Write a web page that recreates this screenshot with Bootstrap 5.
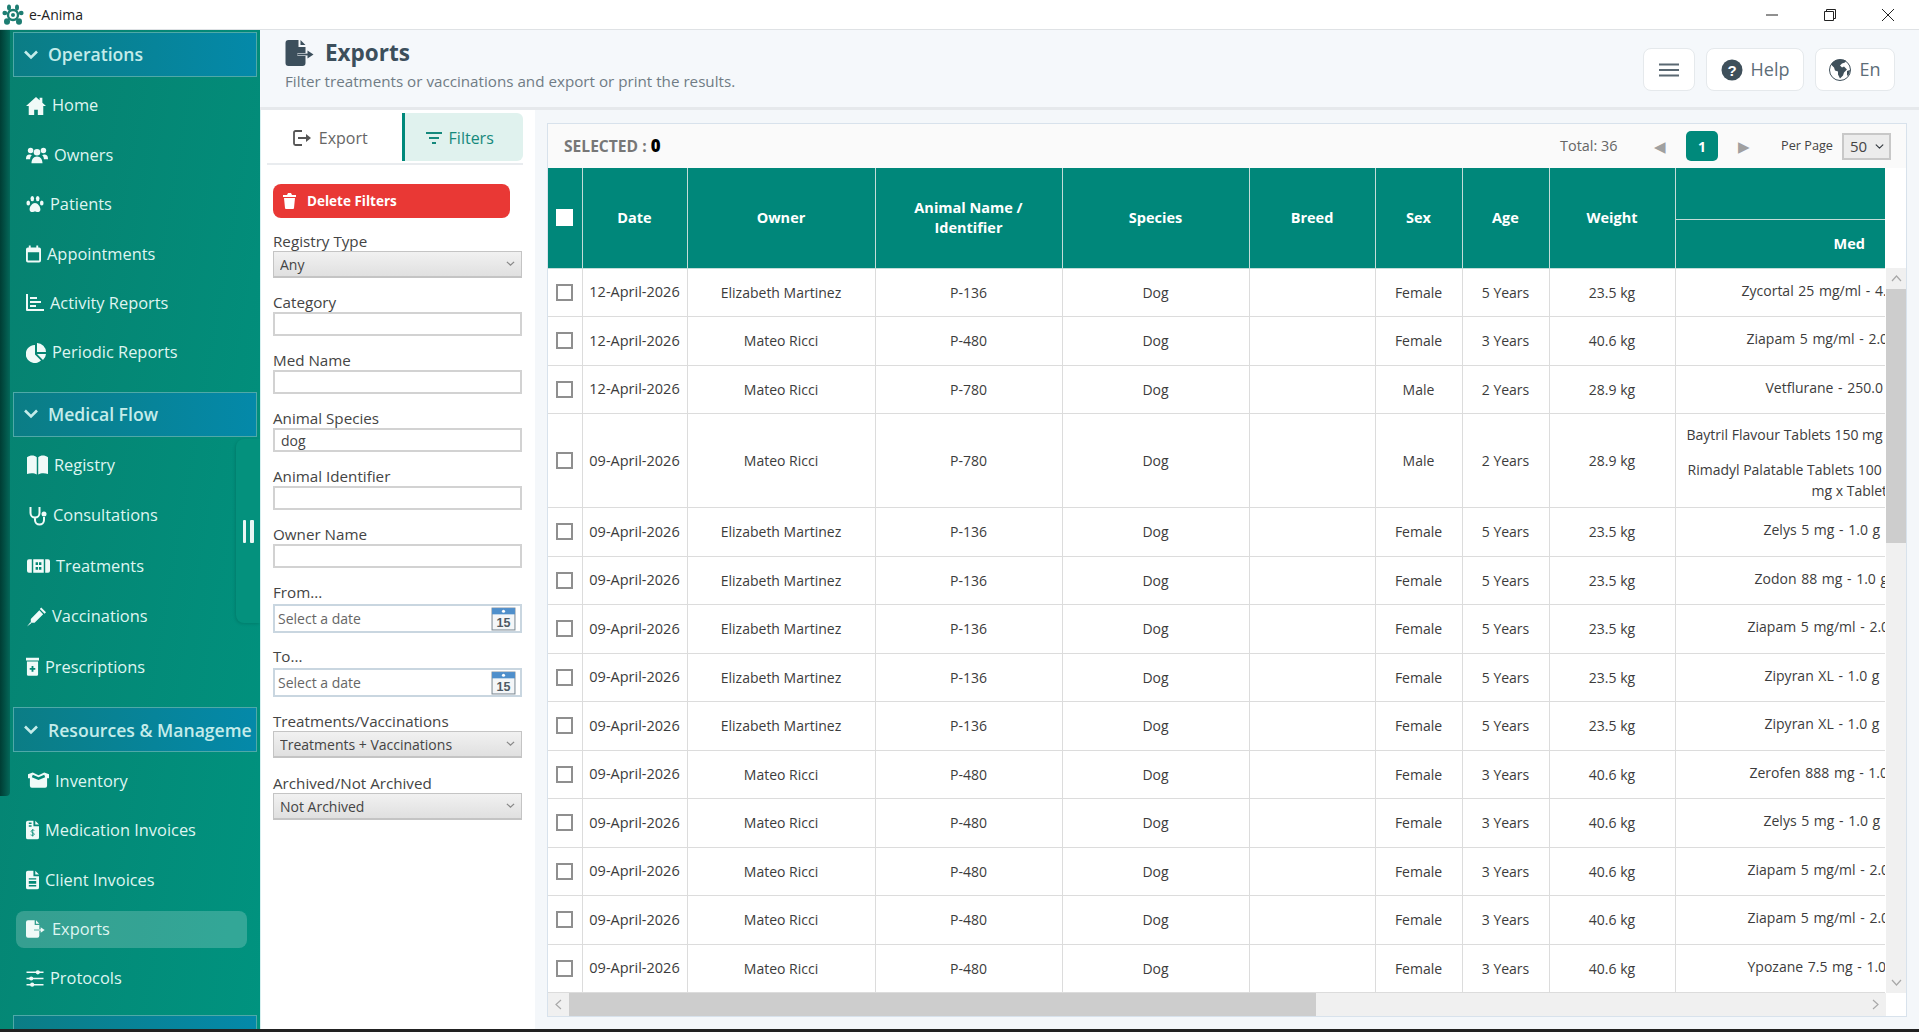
<!DOCTYPE html>
<html lang="en">
<head>
  <meta charset="UTF-8" />
  <meta name="viewport" content="width=device-width, initial-scale=1" />
  <title>e-Anima</title>
  <link href="https://cdn.jsdelivr.net/npm/bootstrap@5.3.2/dist/css/bootstrap.min.css" rel="stylesheet" />
  <style>
    html, body { height: 100%; }
    body {
      font-family: "Open Sans", "Noto Sans", sans-serif;
      font-size: 14px;
      color: #3c3c3c;
      background: #f4f7fa;
      overflow: hidden;
    }
    .win-title { height: 30px; background: #fff; border-bottom: 1px solid #dfe2e5; flex: none; }
    .win-title .app-name { font-size: 14px; color: #222; margin-left: 5px; }
    .win-btns { gap: 46px; padding-right: 25px; }
    .bottom-bar { height: 3px; background: #222; flex: none; }

    /* sidebar */
    .side-nav { width: 260px; flex: none; background: linear-gradient(100deg, #07806f, #00937f); overflow: hidden; position: relative; }
    .side-strip { width: 10px; flex: none; }
    .side-thumb { height: 766px; background: linear-gradient(90deg, #003d34, #04685a); border-radius: 0 0 4px 0; }
    .side-menu { width: 250px; flex: none; }
    .side-head {
      height: 45px; margin: 2px 3px 0 3px; padding: 0 4px 0 9px;
      background: linear-gradient(90deg, #0b7d85, #0489a9);
      border: 1px solid #4fa9a8;
      color: #c4ecea; font-weight: 600; font-size: 17.6px;
      white-space: nowrap; overflow: hidden;
    }
    .side-head svg { width: 16px; height: 12px; margin-right: 9px; flex: none; }
    .side-head span { overflow: hidden; min-width: 0; }
    .side-group { padding: 4px 0 12.5px 0; }
    .side-item { height: 49.4px; padding-left: 16px; color: #dff5f1; font-size: 16.4px; gap: 6px; }
    .med-group { padding: 3px 0 15px 0; }
    .med-group .side-item { height: 50.5px; }
    .side-item svg { height: 20px; flex: none; fill: #f0faf8; }
    .side-item.current { background: rgba(255, 255, 255, .2); border-radius: 8px; margin: 6px 13px 6px 6px; height: 37px; padding-left: 10px; }
    .side-handle { position: absolute; right: 0; top: 409px; width: 24px; height: 184px; background: #04917d; border-radius: 8px 0 0 8px; box-shadow: -1px 1px 3px rgba(0, 0, 0, .12); }
    .side-handle span { width: 3.5px; height: 23px; background: #e8f6f3; border-radius: 1px; }

    /* page header */
    .page-head { height: 80px; flex: none; background: #f5f8fb; border-bottom: 3px solid #e6e9ec; padding: 9px 24px 0 25px; }
    .page-head h1 { font-size: 22.5px; font-weight: 700; color: #3c4f5c; margin: 0 0 0 1px; }
    .page-head p { font-size: 15.2px; color: #707c85; margin: 4px 0 0; }
    .head-btn {
      height: 43px; background: #fff; border: 1px solid #e5e9ec; border-radius: 8px;
      color: #5d6d78; font-size: 18px; gap: 8px;
    }
    .head-btns { gap: 11px; padding-top: 9px; height: 52px; }

    /* filters */
    .filter-pane { width: 275px; flex: none; background: #fff; padding: 3px 14px 0 12px; border-left: 1px solid #d7f0f0; }
    .tab-row { height: 52px; border-bottom: 2px solid #e9ecef; margin: 0 -2px 0 -6px; padding-bottom: 2px; }
    .tab-btn { font-size: 16px; color: #666; gap: 7px; padding: 2px 9px 0 0; }
    .tab-btn.tab-export { width: 137px; }
    .tab-btn.tab-filter { width: 122px; background: #e0f2ee; color: #15897c; border-left: 3px solid #00897b; border-radius: 0 6px 6px 0; }
    .btn-wipe {
      width: 237px; height: 34px; margin: 19px 0 14px; padding: 0 0 0 10px; gap: 11px;
      background: #e93835; border: 0; border-radius: 8px; color: #fff; font-size: 13.5px; font-weight: 700;
    }
    .btn-wipe:hover { background: #e93835; color: #fff; }
    .fld { margin-bottom: 15px; }
    .fld.fld-from, .fld.fld-last { margin-bottom: 16px; }
    .fld.fld-from { margin-bottom: 14px; }
    .fld.fld-to { margin-bottom: 15px; }
    .fld label { display: block; font-size: 15.2px; line-height: 19px; color: #444; }
    .fld .form-control, .fld .form-select {
      width: 249px; border-radius: 0; font-size: 14px; padding: 0 6px; color: #444; box-shadow: none;
    }
    .fld .form-control { height: 24px; border: 2px solid #d2d2d2; }
    .fld .form-select {
      --chev: url("data:image/svg+xml,%3csvg xmlns='http://www.w3.org/2000/svg' viewBox='0 0 10 6'%3e%3cpath fill='none' stroke='%23888' stroke-width='1.4' d='M1 1l4 4 4-4'/%3e%3c/svg%3e");
      height: 27px; border: 1px solid #c4c4c4; border-bottom-width: 2px;
      background-image: var(--chev), linear-gradient(#f1f1f1, #e0e0e0);
      background-size: 9px, 100%; background-position: right 6px center, 0 0; background-repeat: no-repeat;
    }
    .date-box { width: 249px; height: 29px; margin-top: 2px; border: 2px solid #c9d6e0; padding: 0 4px 0 3px; background: #fff; }
    .date-box span { font-size: 14px; color: #666; }
    .date-box svg { width: 25px; height: 25px; }

    /* table */
    .gutter { width: 12px; flex: none; }
    .grid-pane { margin: 13px 12px 12px 0; min-width: 0; background: #fff; border: 1px solid #d8e2ec; }
    .grid-bar { height: 44px; flex: none; background: #fafafa; padding: 0 15px 0 16px; }
    .sel-count { font-weight: 700; font-size: 15.6px; color: #777; }
    .sel-count b { color: #000; font-size: 16.8px; }
    .total-lbl { font-size: 14.4px; color: #666; width: 94px; }
    .pg-arrow { color: #a0a0a0; font-size: 15px; line-height: 1; }
    .pg-cur { width: 32px; height: 30px; background: #00897b; color: #fff; border-radius: 5px; font-weight: 700; font-size: 14px; margin: 0 20px; }
    .per-lbl { font-size: 12.7px; color: #444; margin: 0 9px 0 31px; }
    .per-sel.form-select {
      width: 49px; height: 27px; border-radius: 0; padding: 0 0 0 6px; font-size: 15px; color: #444; border: 2px solid #c8c8c8;
      background-color: #ececec; background-size: 9px; background-position: right 5px top 7px;
    }
    .grid-view { min-height: 0; width: 1337px; overflow: hidden; }
    .grid-tbl { table-layout: fixed; width: 1337px; margin: 0; font-size: 14px; border-collapse: collapse; }
    .grid-tbl th {
      background: #00877a; color: #fff; border: 1px solid #c4dcd8; padding: 0 8px; text-align: center;
      vertical-align: middle; font-size: 14.5px; line-height: 20px; font-weight: 700; box-shadow: none;
    }
    .grid-tbl thead th:first-child { padding: 0 5px; }
    .grid-tbl thead tr:first-child th { border-top: 0; height: 51px; }
    .grid-tbl thead tr:last-child th { height: 49px; }
    .grid-tbl thead th:first-child, .grid-tbl tbody td:first-child { border-left: 0; }
    .grid-tbl thead th:last-child, .grid-tbl tbody td:last-child { border-right: 0; }
    .grid-tbl td {
      height: 48.5px; padding: 0 5px; border: 1px solid #dcdcdc; text-align: center; vertical-align: middle;
      color: #3c3c3c; white-space: nowrap; overflow: hidden;
    }
    .grid-tbl td:nth-child(2) { font-size: 14.5px; padding: 0 2px; }
    .grid-tbl td.med-cell { padding: 0 0 4px 0; text-align: left; word-spacing: 1px; }
    .grid-tbl td.med-multi { height: 94px; padding: 3px 0 0 0; word-spacing: 0; }
    .med-line { white-space: nowrap; line-height: 21px; }
    .med-line + .med-line { margin-top: 14px; }
    .med-line + .med-wrap { margin-top: 0; }
    .grid-tbl .form-check-input {
      width: 17px; height: 17px; margin: 0; float: none; border-radius: 0; border: 2px solid #8f8f8f; display: block; margin-left: 3px;
    }
    .grid-tbl th .form-check-input { border-color: #fff; }
    .sb-v { width: 20px; flex: none; background: #f0f0f0; }
    .sb-top { height: 100px; flex: none; background: #fff; }
    .sb-arrow { height: 21px; flex: none; color: #a8a8a8; }
    .sb-v .sb-thumb { height: 254px; flex: none; background: #cdcdcd; }
    .sb-h { height: 23px; flex: none; background: #f0f0f0; }
    .sb-h .sb-thumb { width: 747px; background: #cdcdcd; }
    .sb-side { width: 21px; flex: none; color: #a8a8a8; }
    .sb-corner { width: 20px; flex: none; background: #fff; }
  </style>
</head>
<body class="d-flex flex-column">
  <svg width="0" height="0" class="d-none">
    <symbol id="i-chev" viewBox="0 0 16 12"><path d="M2 2.5l6 6 6-6" fill="none" stroke="#c4ecea" stroke-width="2.6"/></symbol>
    <symbol id="i-file-export" viewBox="0 0 30 26"><path d="M3 0h10v7h7v6h-8v3h8v7a3 3 0 0 1-3 3H3a3 3 0 0 1-3-3V3a3 3 0 0 1 3-3zM15 0l5 5h-5z"/><path d="M12 14.5h12" stroke="currentColor" stroke-width="1.8" fill="none"/><path d="M22 10.5l6 4-6 4z"/></symbol>
    <symbol id="i-x" viewBox="0 0 12 12"><path d="M0 0l12 12M12 0L0 12" stroke="#222" fill="none"/></symbol>
  </svg>

  <div class="win-title d-flex align-items-center">
    <svg width="22" height="22" viewBox="0 0 22 22" style="margin-left:2px"><g fill="#1d7d72"><circle cx="11" cy="11" r="5" fill="none" stroke="#1d7d72" stroke-width="2.4"/><circle cx="11" cy="11" r="2"/><ellipse cx="7" cy="3.5" rx="2" ry="3"/><ellipse cx="15" cy="3.5" rx="2" ry="3"/><ellipse cx="2.8" cy="9" rx="2.4" ry="2.2"/><ellipse cx="19.2" cy="9" rx="2.4" ry="2.2"/><ellipse cx="5" cy="17.5" rx="3" ry="3.2"/><ellipse cx="17" cy="17.5" rx="3" ry="3.2"/></g></svg>
    <span class="app-name">e-Anima</span>
    <div class="win-btns d-flex align-items-center ms-auto">
      <svg width="12" height="12" viewBox="0 0 12 12"><path d="M0 6h12" stroke="#222"/></svg>
      <svg width="12" height="12" viewBox="0 0 12 12"><path d="M.5 2.5h9v9h-9zM2.5 2.5v-2h9v9h-2" fill="none" stroke="#222"/></svg>
      <svg width="12" height="12"><use href="#i-x"/></svg>
    </div>
  </div>

  <div class="d-flex flex-grow-1" style="min-height:0">
    <aside class="side-nav d-flex">
      <div class="side-strip"><div class="side-thumb"></div></div>
      <div class="side-menu">
        <div class="side-head d-flex align-items-center"><svg><use href="#i-chev"/></svg>Operations</div>
        <div class="side-group">
          <div class="side-item d-flex align-items-center"><svg viewBox="0 0 22 20" width="20"><path d="M11 0L0 10h3v10h6v-6h4v6h6V10h3l-4-3.6V1h-3v2.7z"/></svg>Home</div>
          <div class="side-item d-flex align-items-center"><svg viewBox="0 0 24 20" width="22"><circle cx="5" cy="5" r="3"/><circle cx="19" cy="5" r="3"/><circle cx="12" cy="7" r="3.6"/><path d="M0 14c0-3 1.500-4.500 4-4.500 1 0 1.800.3 2.400.8C5 11.500 4.500 13 4.500 14.500H0zM24 14c0-3-1.500-4.500-4-4.500-1 0-1.800.3-2.400.8 1.400 1.200 1.900 2.700 1.900 4.200H24zM6 19c0-4 2-7.500 6-7.500s6 3.500 6 7.500z"/></svg>Owners</div>
          <div class="side-item d-flex align-items-center"><svg viewBox="0 0 20 20" width="18"><ellipse cx="7" cy="4" rx="2" ry="3"/><ellipse cx="13" cy="4" rx="2" ry="3"/><ellipse cx="2.500" cy="9" rx="2" ry="2.800"/><ellipse cx="17.500" cy="9" rx="2" ry="2.800"/><path d="M10 9c-3 0-6 4-6 7 0 2 1.500 3 3 3s2-.7 3-.7 1.500.7 3 .7 3-1 3-3c0-3-3-7-6-7z"/></svg>Patients</div>
          <div class="side-item d-flex align-items-center"><svg viewBox="0 0 16 20" width="15"><path d="M3 1h2v2h6V1h2v2h1a2 2 0 0 1 2 2v12a2 2 0 0 1-2 2H2a2 2 0 0 1-2-2V5a2 2 0 0 1 2-2h1zM2 8v9h12V8z"/></svg>Appointments</div>
          <div class="side-item d-flex align-items-center"><svg viewBox="0 0 18 20" width="18"><path d="M0 1h2v15h16v2H1a1 1 0 0 1-1-1zM4 4h7v2H4zM4 8h11v2H4zM4 12h6v2H4z"/></svg>Activity Reports</div>
          <div class="side-item d-flex align-items-center"><svg viewBox="0 0 20 20" width="20"><path d="M9 2v9.500l6 6A9 9 0 1 1 9 2zM11 0a9 9 0 0 1 9 9h-9zM11 11h9a9 9 0 0 1-3 6z"/></svg>Periodic Reports</div>
        </div>
        <div class="side-head d-flex align-items-center"><svg><use href="#i-chev"/></svg>Medical Flow</div>
        <div class="side-group med-group">
          <div class="side-item d-flex align-items-center" style="padding-left:17px"><svg viewBox="0 0 20 18" width="21"><path d="M0 1.500C3-.5 7-.5 9.300 1.500V18C7 16.500 3 16.500 0 17.500zM20 1.500C17-.5 13-.5 10.700 1.500V18c2.300-1.500 6.300-1.500 9.300-.5z"/></svg>Registry</div>
          <div class="side-item d-flex align-items-center" style="padding-left:18px"><svg viewBox="0 0 18 20" width="19"><path d="M2 1v6a4.500 4.500 0 0 0 9 0V1M6.500 12v2a4.500 4.500 0 0 0 9 0v-3" fill="none" stroke="#f0faf8" stroke-width="2"/><circle cx="15.500" cy="8" r="2.500"/></svg>Consultations</div>
          <div class="side-item d-flex align-items-center" style="padding-left:17px"><svg viewBox="0 0 24 14" width="23" height="14" style="height:14px"><path d="M2 0h3v14H2a2 2 0 0 1-2-2V2a2 2 0 0 1 2-2zM19 0h3a2 2 0 0 1 2 2v10a2 2 0 0 1-2 2h-3zM6.500 0h11v14h-11zM9 3v3h2.500V3zm3.500 0v3H15V3zM9 8v3h2.500V8zm3.500 0v3H15V8z" fill-rule="evenodd"/></svg>Treatments</div>
          <div class="side-item d-flex align-items-center" style="padding-left:17px"><svg viewBox="0 0 20 20" width="19"><path d="M13 3l4 4-9 9H4v-4zM15 0l5 5-1.500 1.500-5-5zM0 20l3.500-4.500 1 1z"/></svg>Vaccinations</div>
          <div class="side-item d-flex align-items-center"><svg viewBox="0 0 14 20" width="13"><path d="M0 0h14v3H0zM1 4h12v14a1.500 1.500 0 0 1-1.500 1.500h-9A1.500 1.500 0 0 1 1 18zM6 9v2H4v2h2v2h2v-2h2v-2H8V9z" fill-rule="evenodd"/></svg>Prescriptions</div>
        </div>
        <div class="side-head d-flex align-items-center" style="margin-top:0"><svg><use href="#i-chev"/></svg><span>Resources &amp; Management</span></div>
        <div class="side-group">
          <div class="side-item d-flex align-items-center" style="padding-left:18px"><svg viewBox="0 0 22 18" width="21"><path d="M0 2L5 0l6 3 6-3 5 2v4h-2v8a2 2 0 0 1-2 2H4a2 2 0 0 1-2-2V6H0zM5 2.500L4 5l7 3 7-3-1-2.500L11 5z" fill-rule="evenodd"/></svg>Inventory</div>
          <div class="side-item d-flex align-items-center"><svg viewBox="0 0 14 20" width="13"><path d="M2 0h6v6h6v12a2 2 0 0 1-2 2H2a2 2 0 0 1-2-2V2a2 2 0 0 1 2-2zM10 0l4 4h-4zM3 2v1.500h3V2zM3 5v1.500h3V5z" fill-rule="evenodd"/><path d="M9 10.500C8 9.700 5.500 10 5.500 11.500S9 13 9 14.500 6 16 5 15.200M7.200 9v8" fill="none" stroke="#0a8c7a" stroke-width=".9"/></svg>Medication Invoices</div>
          <div class="side-item d-flex align-items-center"><svg viewBox="0 0 14 20" width="13"><path d="M2 0h6v6h6v12a2 2 0 0 1-2 2H2a2 2 0 0 1-2-2V2a2 2 0 0 1 2-2zM10 0l4 4h-4zM3 8v1.500h8V8zM3 11v3h8v-3zM3 15.500V17h8v-1.500z" fill-rule="evenodd"/></svg>Client Invoices</div>
          <div class="side-item current d-flex align-items-center"><svg width="20" height="18" style="height:18px;color:#f0faf8"><use href="#i-file-export"/></svg>Exports</div>
          <div class="side-item d-flex align-items-center"><svg viewBox="0 0 18 18" width="18" height="17" style="height:17px"><path d="M0 2.500h18M0 9h18M0 15.500h18" stroke="#f0faf8" stroke-width="1.600" fill="none"/><circle cx="12" cy="2.500" r="2.200"/><circle cx="5" cy="9" r="2.200"/><circle cx="6" cy="15.500" r="2.200"/></svg>Protocols</div>
        </div>
        <div class="side-head" style="margin-top:0"></div>
      </div>
      <div class="side-handle d-flex align-items-center justify-content-center gap-1"><span></span><span></span></div>
    </aside>

    <main class="d-flex flex-column flex-grow-1" style="min-width:0">
      <header class="page-head d-flex">
        <div>
          <div class="d-flex align-items-center gap-2">
            <svg width="31" height="26" style="color:#3c4f5c;fill:#3c4f5c"><use href="#i-file-export"/></svg>
            <h1>Exports</h1>
          </div>
          <p>Filter treatments or vaccinations and export or print the results.</p>
        </div>
        <div class="head-btns ms-auto d-flex">
          <div class="head-btn d-flex align-items-center justify-content-center" style="width:52px"><svg width="20" height="14" viewBox="0 0 20 14"><path d="M0 1.500h20M0 7h20M0 12.500h20" stroke="#5a6872" stroke-width="2"/></svg></div>
          <div class="head-btn d-flex align-items-center justify-content-center" style="width:98px"><svg width="22" height="22" viewBox="0 0 22 22"><circle cx="11" cy="11" r="10.500" fill="#3f505b"/><text x="11" y="16.500" text-anchor="middle" font-family="Liberation Sans" font-size="15" font-weight="700" fill="#fff">?</text></svg>Help</div>
          <div class="head-btn d-flex align-items-center justify-content-center" style="width:80px"><svg width="22" height="22" viewBox="0 0 22 22"><circle cx="11" cy="11" r="10.500" fill="#fff" stroke="#3f505b" stroke-width="1"/><path d="M11 .5a10.500 10.500 0 0 0-9 5l3 3 1 3 3 1v3l2 4 3-3 1-3 3-3-3-3-2 1-2-2 2-2 3-1 1-2A10.500 10.500 0 0 0 11 .5zM21 11l-3 1v4l1 1a10.500 10.500 0 0 0 2-6z" fill="#3f505b"/></svg>En</div>
        </div>
      </header>

      <div class="d-flex flex-grow-1" style="min-height:0">
        <section class="filter-pane">
          <div class="tab-row d-flex">
            <div class="tab-btn tab-export d-flex align-items-center justify-content-center">
              <svg width="19" height="16" viewBox="0 0 19 16"><path d="M9 1H2.500A1.500 1.500 0 0 0 1 2.500v11A1.500 1.500 0 0 0 2.500 15H9" fill="none" stroke="#555" stroke-width="1.800"/><path d="M5 8h9" stroke="#555" stroke-width="2"/><path d="M13 4l5 4-5 4z" fill="#555"/></svg>Export
            </div>
            <div class="tab-btn tab-filter d-flex align-items-center justify-content-center">
              <svg width="16" height="13" viewBox="0 0 16 13"><path d="M0 1h16M3 6h10M6 11h4" stroke="#15897c" stroke-width="2"/></svg>Filters
            </div>
          </div>
          <button type="button" class="btn btn-wipe d-flex align-items-center">
            <svg width="13" height="16" viewBox="0 0 13 16"><path d="M0 2h4l1-2h3l1 2h4v2H0zM1 5h11l-1 10a1 1 0 0 1-1 1H3a1 1 0 0 1-1-1z" fill="#fff"/></svg>Delete Filters
          </button>
          <div class="fld"><label>Registry Type</label><select class="form-select"><option>Any</option></select></div>
          <div class="fld"><label>Category</label><input class="form-control" type="text"></div>
          <div class="fld"><label>Med Name</label><input class="form-control" type="text"></div>
          <div class="fld"><label>Animal Species</label><input class="form-control" type="text" value="dog"></div>
          <div class="fld"><label>Animal Identifier</label><input class="form-control" type="text"></div>
          <div class="fld"><label>Owner Name</label><input class="form-control" type="text"></div>
          <div class="fld fld-from"><label>From...</label>
            <div class="date-box d-flex align-items-center justify-content-between"><span>Select a date</span>
              <svg viewBox="0 0 24 24"><rect x="1" y="2" width="22" height="21" fill="#f4f6f8" stroke="#7d8a94"/><rect x="1" y="2" width="22" height="6" fill="#4f8fcb"/><circle cx="12" cy="5" r="1.500" fill="#fff"/><text x="12" y="20.500" text-anchor="middle" font-family="Liberation Sans" font-size="12" font-weight="700" fill="#4d5a64">15</text></svg>
            </div></div>
          <div class="fld fld-to"><label>To...</label>
            <div class="date-box d-flex align-items-center justify-content-between"><span>Select a date</span>
              <svg viewBox="0 0 24 24"><rect x="1" y="2" width="22" height="21" fill="#f4f6f8" stroke="#7d8a94"/><rect x="1" y="2" width="22" height="6" fill="#4f8fcb"/><circle cx="12" cy="5" r="1.500" fill="#fff"/><text x="12" y="20.500" text-anchor="middle" font-family="Liberation Sans" font-size="12" font-weight="700" fill="#4d5a64">15</text></svg>
            </div></div>
          <div class="fld fld-last"><label>Treatments/Vaccinations</label><select class="form-select"><option>Treatments + Vaccinations</option></select></div>
          <div class="fld"><label>Archived/Not Archived</label><select class="form-select"><option>Not Archived</option></select></div>
        </section>
        <div class="gutter"></div>
        <section class="grid-pane d-flex flex-column flex-grow-1">
          <div class="grid-bar d-flex align-items-center">
            <div class="sel-count">SELECTED : <b>0</b></div>
            <div class="ms-auto total-lbl">Total: 36</div>
            <span class="pg-arrow">◀</span>
            <div class="pg-cur d-flex align-items-center justify-content-center">1</div>
            <span class="pg-arrow">▶</span>
            <span class="per-lbl">Per Page</span>
            <select class="form-select per-sel"><option>50</option></select>
          </div>
          <div class="d-flex flex-grow-1" style="min-height:0">
            <div class="grid-view flex-grow-1">
              <table class="table grid-tbl">
                <colgroup>
                  <col style="width:34px"><col style="width:105px"><col style="width:188px"><col style="width:187px"><col style="width:187px"><col style="width:126px"><col style="width:87px"><col style="width:87px"><col style="width:126px"><col style="width:210px">
                </colgroup>
                <thead>
                  <tr>
                    <th rowspan="2"><input class="form-check-input" type="checkbox"></th>
                    <th rowspan="2">Date</th><th rowspan="2">Owner</th><th rowspan="2">Animal Name /<br>Identifier</th>
                    <th rowspan="2">Species</th><th rowspan="2">Breed</th><th rowspan="2">Sex</th><th rowspan="2">Age</th><th rowspan="2">Weight</th>
                    <th></th>
                  </tr>
                  <tr><th style="text-align:right;padding-right:20px">Med</th></tr>
                </thead>
                <tbody id="grid-body"></tbody>
              </table>
            </div>
            <div class="sb-v d-flex flex-column">
              <div class="sb-top"></div>
              <div class="sb-arrow d-flex align-items-center justify-content-center"><svg width="11" height="7" viewBox="0 0 11 7"><path d="M1 6l4.500-5L10 6" fill="none" stroke="currentColor" stroke-width="1.200"/></svg></div>
              <div class="sb-thumb"></div>
              <div class="flex-grow-1"></div>
              <div class="sb-arrow d-flex align-items-center justify-content-center"><svg width="11" height="7" viewBox="0 0 11 7"><path d="M1 1l4.500 5L10 1" fill="none" stroke="currentColor" stroke-width="1.200"/></svg></div>
            </div>
          </div>
          <div class="sb-h d-flex">
            <div class="sb-side d-flex align-items-center justify-content-center"><svg width="7" height="11" viewBox="0 0 7 11"><path d="M6 1L1 5.500 6 10" fill="none" stroke="currentColor" stroke-width="1.200"/></svg></div>
            <div class="sb-thumb"></div>
            <div class="flex-grow-1"></div>
            <div class="sb-side d-flex align-items-center justify-content-center"><svg width="7" height="11" viewBox="0 0 7 11"><path d="M1 1l5 4.500L1 10" fill="none" stroke="currentColor" stroke-width="1.200"/></svg></div>
            <div class="sb-corner"></div>
          </div>
        </section>
      </div>
    </main>
  </div>
  <div class="bottom-bar"></div>

  <script src="https://cdn.jsdelivr.net/npm/bootstrap@5.3.2/dist/js/bootstrap.bundle.min.js"></script>
  <script>
    // date, owner, id, sex, age, weight, [med text, left offset in px]
    const em = 'Elizabeth Martinez', mr = 'Mateo Ricci';
    const linhas = [
      ['12-April-2026', em, 'P-136', 'Female', '5 Years', '23.5 kg', [['Zycortal 25 mg/ml - 4.0 ml', 66]]],
      ['12-April-2026', mr, 'P-480', 'Female', '3 Years', '40.6 kg', [['Ziapam 5 mg/ml - 2.0 ml', 71]]],
      ['12-April-2026', mr, 'P-780', 'Male', '2 Years', '28.9 kg', [['Vetflurane - 250.0 ml', 90]]],
      ['09-April-2026', mr, 'P-780', 'Male', '2 Years', '28.9 kg', [['Baytril Flavour Tablets 150 mg', 11], ['Rimadyl Palatable Tablets 100', 12], ['mg x Tablet', 136]]],
      ['09-April-2026', em, 'P-136', 'Female', '5 Years', '23.5 kg', [['Zelys 5 mg - 1.0 g', 88]]],
      ['09-April-2026', em, 'P-136', 'Female', '5 Years', '23.5 kg', [['Zodon 88 mg - 1.0 g', 79]]],
      ['09-April-2026', em, 'P-136', 'Female', '5 Years', '23.5 kg', [['Ziapam 5 mg/ml - 2.0 ml', 72]]],
      ['09-April-2026', em, 'P-136', 'Female', '5 Years', '23.5 kg', [['Zipyran XL - 1.0 g', 89]]],
      ['09-April-2026', em, 'P-136', 'Female', '5 Years', '23.5 kg', [['Zipyran XL - 1.0 g', 89]]],
      ['09-April-2026', mr, 'P-480', 'Female', '3 Years', '40.6 kg', [['Zerofen 888 mg - 1.0 g', 74]]],
      ['09-April-2026', mr, 'P-480', 'Female', '3 Years', '40.6 kg', [['Zelys 5 mg - 1.0 g', 88]]],
      ['09-April-2026', mr, 'P-480', 'Female', '3 Years', '40.6 kg', [['Ziapam 5 mg/ml - 2.0 ml', 72]]],
      ['09-April-2026', mr, 'P-480', 'Female', '3 Years', '40.6 kg', [['Ziapam 5 mg/ml - 2.0 ml', 72]]],
      ['09-April-2026', mr, 'P-480', 'Female', '3 Years', '40.6 kg', [['Ypozane 7.5 mg - 1.0 g', 72]]]
    ];

    const corpo = document.getElementById('grid-body');
    linhas.forEach(l => {
      const tr = document.createElement('tr');
      const meds = l[6].map((m, i) => {
        const cls = i === 2 ? 'med-line med-wrap' : 'med-line';
        return `<div class="${cls}" style="padding-left:${m[1]}px">${m[0]}</div>`;
      }).join('');
      tr.innerHTML = `<td><input class="form-check-input" type="checkbox"></td>
        <td>${l[0]}</td><td>${l[1]}</td><td>${l[2]}</td><td>Dog</td><td></td>
        <td>${l[3]}</td><td>${l[4]}</td><td>${l[5]}</td>
        <td class="med-cell${l[6].length > 1 ? ' med-multi' : ''}">${meds}</td>`;
      corpo.appendChild(tr);
    });
  </script>
</body>
</html>
